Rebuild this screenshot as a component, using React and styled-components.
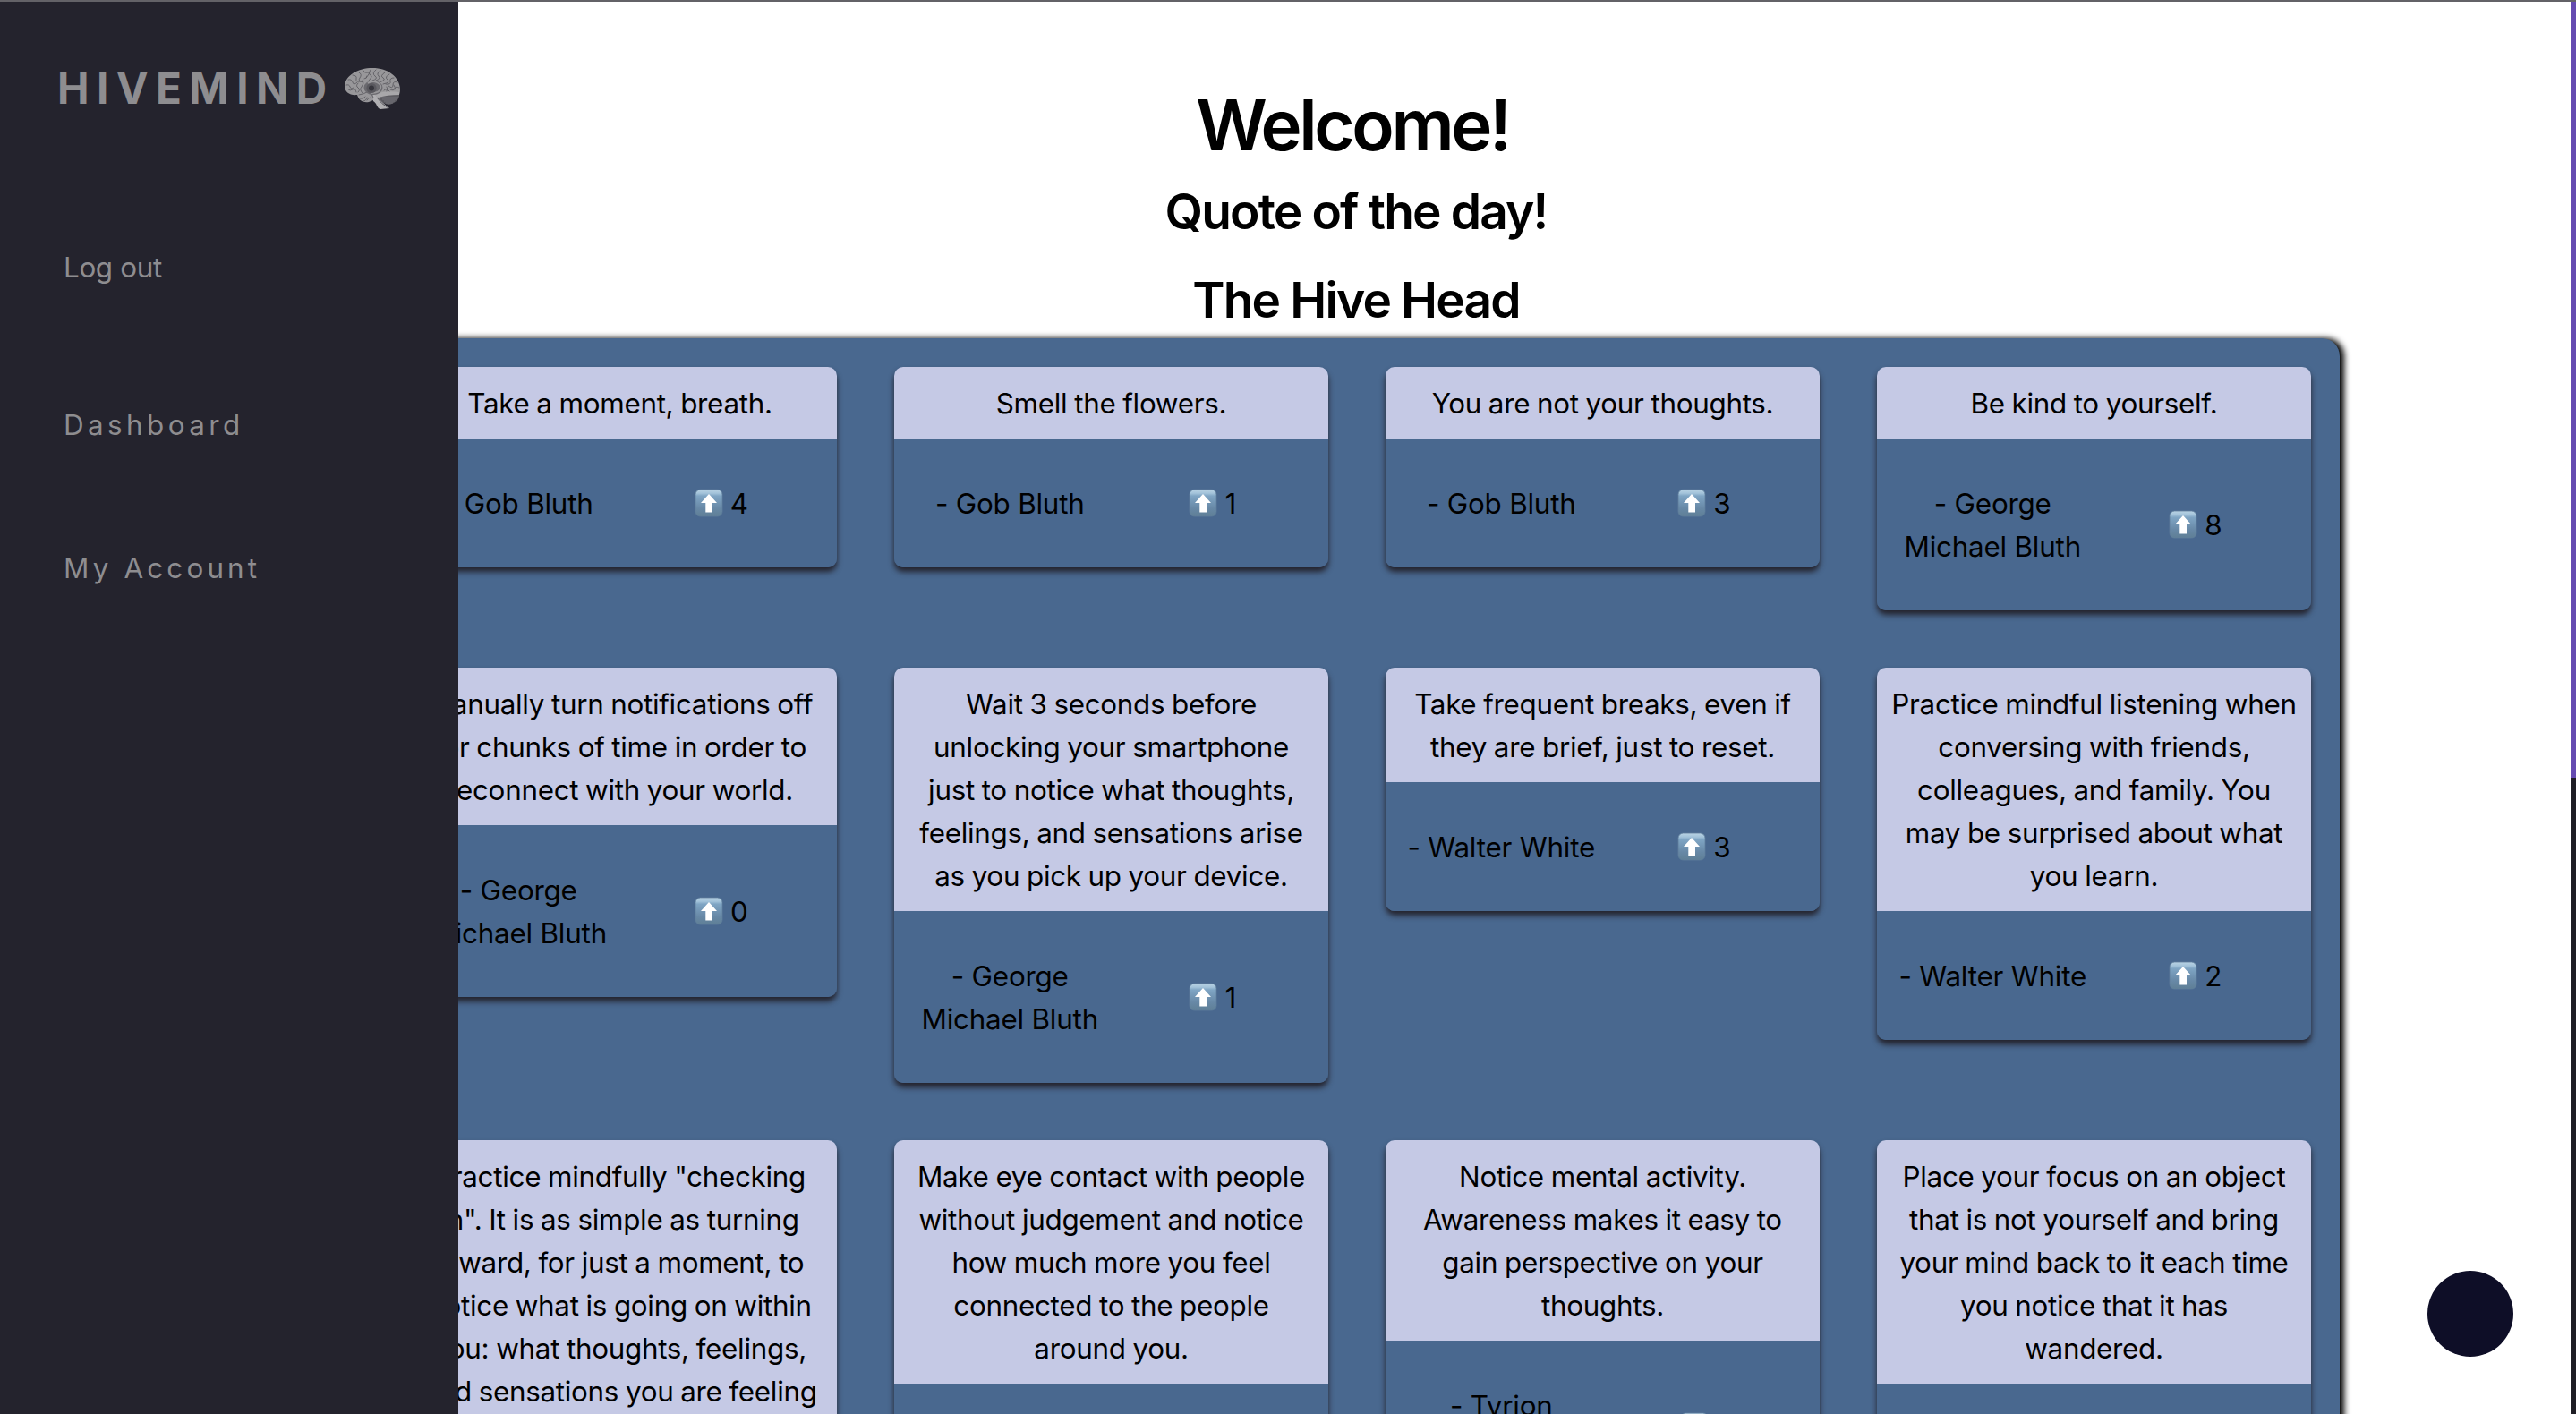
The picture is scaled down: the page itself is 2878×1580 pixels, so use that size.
import React from "react";
import styled, { createGlobalStyle } from "styled-components";

const Global = createGlobalStyle`
  * { box-sizing: border-box; }
  html, body { margin: 0; padding: 0; overflow: hidden; }
  body { background: #fff; font-family: Inter, "Liberation Sans", sans-serif; color: #000; }
  h1, h2, p { margin: 0; }
`;

const Page = styled.div`
  display: grid;
  grid-template-columns: 512px 1fr 6px;
  width: 2878px;
  height: 1580px;
  overflow: hidden;
  border-top: 2px solid #636267;
`;

const Sidebar = styled.aside`
  z-index: 2;
  display: flex;
  flex-direction: column;
  align-items: flex-start;
  background: #24232d;
  color: #8e8d90;
`;

const Brand = styled.div`
  display: flex;
  align-items: center;
  margin: 67px 0 0 64px;
  height: 60px;
`;

const BrandName = styled.span`
  font-size: 47.6px;
  font-weight: 700;
  line-height: 60px;
  letter-spacing: 8.5px;
`;

const Nav = styled.nav`
  display: flex;
  flex-direction: column;
  margin: 146px 0 0 71px;
`;

const NavItem = styled.a`
  font-size: 31.4px;
  line-height: 48px;
  white-space: nowrap;
  letter-spacing: ${(p) => p.$tracking || 0}px;
  margin-bottom: ${(p) => p.$after || 0}px;
`;

const Main = styled.main`
  display: flex;
  flex-direction: column;
  align-items: center;
  width: 2196px;
  margin-left: -94px;
`;

const Title = styled.h1`
  font-size: 78px;
  font-weight: 600;
  line-height: 96px;
  margin-top: 90px;
  margin-right: 10px;
  letter-spacing: -3.4px;
  white-space: nowrap;
`;

const Subtitle = styled.h2`
  font-size: 55px;
  font-weight: 600;
  line-height: 66px;
  margin-top: ${(p) => p.$top}px;
  margin-right: 2px;
  letter-spacing: -1.85px;
  white-space: nowrap;
`;

const Hive = styled.section`
  flex: none;
  display: grid;
  grid-template-columns: repeat(4, 1fr);
  grid-template-rows: 272px 464px auto;
  align-items: start;
  gap: 64px;
  width: 100%;
  height: 1400px;
  margin-top: 10px;
  padding: 32px;
  border-radius: 20px;
  background: #49688f;
  box-shadow: 5px 0 7px #000;
`;

const Card = styled.article`
  border-radius: 10px;
  box-shadow: 0 5px 6px #24232d;
  overflow: hidden;
`;

const Quote = styled.p`
  display: flex;
  flex-direction: column;
  align-items: center;
  padding: 17px 0 15px;
  background: #c5c9e5;
  font-size: 31.4px;
  line-height: 48px;
  letter-spacing: -0.3px;
  word-spacing: -0.7px;
`;

const Line = styled.span`
  white-space: nowrap;
`;

const Footer = styled.footer`
  display: grid;
  grid-template-columns: 1fr 1fr;
  align-items: center;
  min-height: 144px;
  padding: 49px 16px 47px;
  background: #49688f;
  font-size: 31.4px;
  line-height: 48px;
  letter-spacing: -0.22px;
`;

const Author = styled.span`
  display: flex;
  flex-direction: column;
  align-items: center;
`;

const Votes = styled.span`
  display: flex;
  align-items: center;
  justify-content: center;
  gap: 8px;
`;

const Arrow = styled.svg`
  display: block;
  flex: none;
  margin-bottom: 3px;
`;

const ChatButton = styled.button`
  position: fixed;
  right: 70px;
  bottom: 64px;
  width: 96px;
  height: 96px;
  padding: 0;
  border: 0;
  border-radius: 50%;
  background: #0e0e27;
`;

const ScrollTrack = styled.div`
  grid-column: 3;
  background: #1f1e25;
`;

const ScrollThumb = styled.div`
  height: 867px;
  background: #654bb1;
`;

const BrainSvg = styled.svg`
  display: block;
  margin-left: 10px;
`;

function Brain() {
  return (
    <BrainSvg width="64" height="48" viewBox="0 0 64 48">
      <path d="M1 21C2 9 16 1 32 1C50 1 62 11 63 24C63 29 62 32 60 33L38 35L28 39C21 40 17 37 15 31C7 32 1 28 1 21Z" fill="#98979a" />
      <path d="M38 34C44 30 55 31 62 30C63 36 57 41 50 42C45 41 41 38 38 34Z" fill="#5c5b61" />
      <path d="M34 31C45 26 54 27 62 28V31C53 31 45 32 39 34Z" fill="#a8a7aa" />
      <path d="M33 30C39 34 42 39 51 46L41 47C36 45 38 41 33 38Z" fill="#b0afb2" />
      <path d="M37 34Q42 41 50 46" fill="none" stroke="#55545a" strokeWidth="1" />
      <g fill="none" stroke="#5d5c62" strokeWidth=".9" strokeLinecap="round">
        <path d="M3 20q3-1 4 2t4 1M5 14q4-1 5 3t5 0M5 25q2 2 5 0t4 3M10 9q5 0 4 4t5 3M17 6q4 2 1 6t4 5M22 4q1 3 5 2t-2 6M16 18q-3 3 0 5t0 5M21 15q2 4-1 7t1 7M30 3q-3 5 0 6t-2 6M36 3q-5 4-1 7t-3 5M41 4q-5 3-2 6t-3 5M46 6q-6 4-2 6t-4 5M51 8q-6 3-2 6t-5 5M56 12q-5 0-4 4t-5 3M60 17q-5-2-5 3t-5 1M62 23q-4-2-5 1t-5 1M48 22q2 2 0 5M26 10q0 3-3 3M45 26q3-3 6 1M56 20q2 2 1 5" />
        <path d="M17 31q6-1 9-3M18 35q4 1 6-2M26 37q1-3 4-3M22 38q3 0 4-4M30 28l3 6" />
      </g>
      <ellipse cx="33" cy="23" rx="10.5" ry="8" fill="#6b6a6f" />
      <path d="M27 18C34 13 43 19 41 24C40 28 35 29 31 29" fill="none" stroke="#98979a" strokeWidth="1.8" />
      <circle cx="31" cy="23.500" r="5.6" fill="#59585e" />
      <circle cx="31" cy="23.500" r="3" fill="#36353c" />
      <g stroke="#85848a" strokeWidth=".6">
        <path d="M42 34h19M43 36h17M45 38h12M47 40h8" />
      </g>
    </BrainSvg>
  );
}

function UpArrow() {
  return (
    <Arrow width="32" height="32" viewBox="0 0 32 32">
      <defs>
        <linearGradient id="key" x1="0" y1="0" x2="0" y2="1">
          <stop offset="0" stopColor="#b9d3e4" />
          <stop offset=".14" stopColor="#a3c3da" />
          <stop offset=".24" stopColor="#7fa5c4" />
          <stop offset=".7" stopColor="#6788a6" />
          <stop offset="1" stopColor="#5f7f96" />
        </linearGradient>
      </defs>
      <rect x="1" y="1" width="30" height="30" rx="5.5" fill="url(#key)" stroke="#5f7f9c" strokeWidth=".8" />
      <path d="M16 6L25 16H20V26.500H12.300V16H7Z" fill="#fff" />
    </Arrow>
  );
}

const cards = [
  { lines: ["Take a moment, breath."], author: ["- Gob Bluth"], votes: 4 },
  { lines: ["Smell the flowers."], author: ["- Gob Bluth"], votes: 1 },
  { lines: ["You are not your thoughts."], author: ["- Gob Bluth"], votes: 3 },
  { lines: ["Be kind to yourself."], author: ["- George", "Michael Bluth"], votes: 8 },
  {
    lines: ["Manually turn notifications off", "for chunks of time in order to", "reconnect with your world."],
    author: ["- George", "Michael Bluth"],
    votes: 0,
  },
  {
    lines: ["Wait 3 seconds before", "unlocking your smartphone", "just to notice what thoughts,", "feelings, and sensations arise", "as you pick up your device."],
    author: ["- George", "Michael Bluth"],
    votes: 1,
  },
  { lines: ["Take frequent breaks, even if", "they are brief, just to reset."], author: ["- Walter White"], votes: 3 },
  {
    lines: ["Practice mindful listening when", "conversing with friends,", "colleagues, and family. You", "may be surprised about what", "you learn."],
    author: ["- Walter White"],
    votes: 2,
  },
  {
    lines: ['Practice mindfully "checking', 'in". It is as simple as turning', "inward, for just a moment, to", "notice what is going on within", "you: what thoughts, feelings,", "and sensations you are feeling"],
  },
  { lines: ["Make eye contact with people", "without judgement and notice", "how much more you feel", "connected to the people", "around you."] },
  {
    lines: ["Notice mental activity.", "Awareness makes it easy to", "gain perspective on your", "thoughts."],
    author: ["- Tyrion", "Lannister"],
    votes: 1,
  },
  { lines: ["Place your focus on an object", "that is not yourself and bring", "your mind back to it each time", "you notice that it has", "wandered."] },
];

function QuoteCard({ lines, author, votes }) {
  return (
    <Card>
      <Quote>
        {lines.map((line) => (
          <Line key={line}>{line}</Line>
        ))}
      </Quote>
      <Footer>
        {author && (
          <>
            <Author>
              {author.map((line) => (
                <Line key={line}>{line}</Line>
              ))}
            </Author>
            <Votes>
              <UpArrow />
              <span>{votes}</span>
            </Votes>
          </>
        )}
      </Footer>
    </Card>
  );
}

export default function App() {
  return (
    <>
      <Global />
      <Page>
        <Sidebar>
          <Brand>
            <BrandName>HIVEMIND</BrandName>
            <Brain />
          </Brand>
          <Nav>
            <NavItem $tracking={-0.35} $after={128}>Log out</NavItem>
            <NavItem $tracking={4.4} $after={112}>Dashboard</NavItem>
            <NavItem $tracking={4.15}>My Account</NavItem>
          </Nav>
        </Sidebar>
        <Main>
          <Title>Welcome!</Title>
          <Subtitle $top={15}>Quote of the day!</Subtitle>
          <Subtitle $top={33}>The Hive Head</Subtitle>
          <Hive>
            {cards.map((card) => (
              <QuoteCard key={card.lines[0]} {...card} />
            ))}
          </Hive>
        </Main>
        <ScrollTrack>
          <ScrollThumb />
        </ScrollTrack>
      </Page>
      <ChatButton aria-label="Chat" />
    </>
  );
}
